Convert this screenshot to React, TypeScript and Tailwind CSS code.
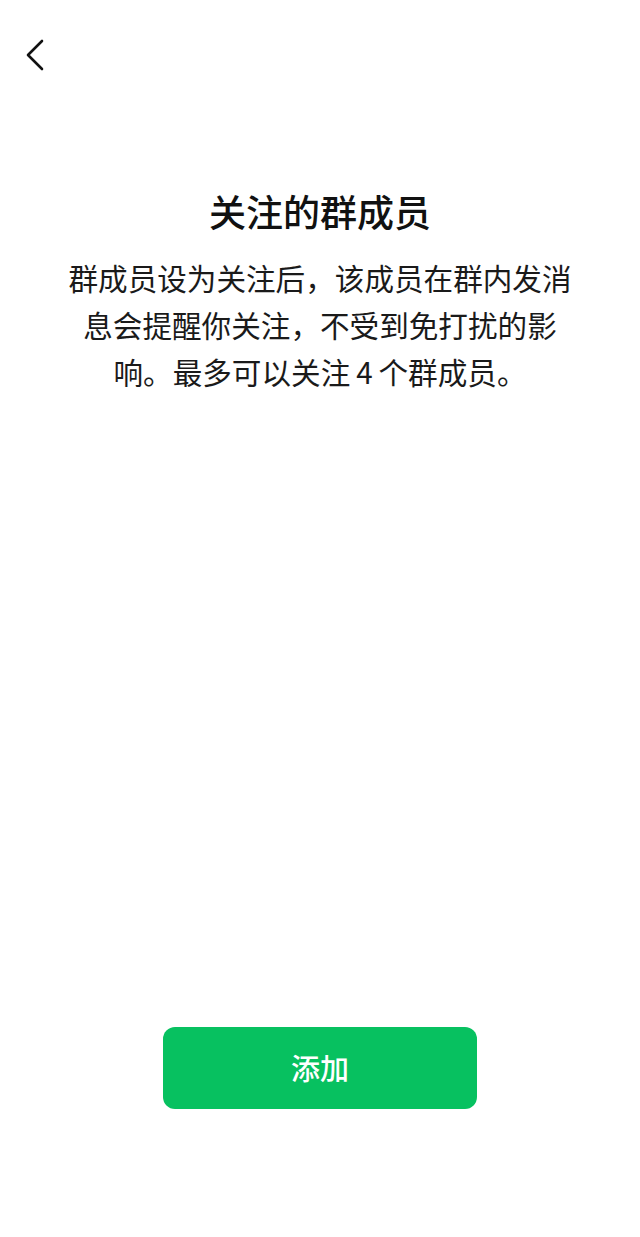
import React from "react";

const BODY = "群成员设为关注后，该成员在群内发消息会提醒你关注，不受到免打扰的影响。最多可以关注\u20094\u2009个群成员。";

export default function App() {
  return (
    <div
      className="flex min-h-[1237px] w-[640px] flex-col bg-white"
      style={{ fontFamily: '"Noto Sans CJK SC", "Noto Sans", sans-serif' }}
    >
      <div className="flex h-[110px] items-start pl-[24px] pt-[38px]">
        <svg width="24" height="34" viewBox="0 0 24 34" fill="none">
          <path d="M18 3 L4 17 L18 31" stroke="#111" strokeWidth="2.6" strokeLinecap="round" strokeLinejoin="round" />
        </svg>
      </div>
      <div className="mt-[75px] text-center text-[37px] font-medium leading-[52px] text-[#111]">
        关注的群成员
      </div>
      <div className="mt-[17px] px-[64px] text-center text-[29.6px] leading-[47px] text-[#1a1a1a]">
        {BODY}
      </div>
      <div className="flex-1" />
      <div className="flex justify-center pb-[128px]">
        <button className="flex h-[82px] w-[314px] items-center justify-center rounded-[12px] bg-[#07c160] text-[29px] font-medium text-white">
          添加
        </button>
      </div>
    </div>
  );
}
